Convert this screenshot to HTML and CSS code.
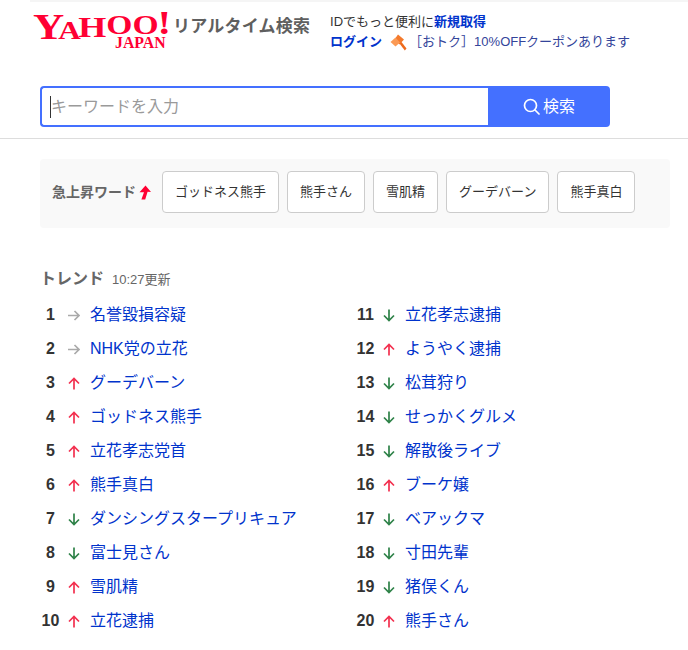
FILE: index.html
```html
<!DOCTYPE html>
<html lang="ja">
<head>
  <meta charset="UTF-8" />
  <meta name="viewport" content="width=device-width, initial-scale=1.0" />
  <title>Yahoo!リアルタイム検索</title>
  <link rel="stylesheet" href="styles.css">
</head>
<body>
  <svg class="defs" width="0" height="0">
    <symbol id="arrow-up" viewBox="0 0 12 13">
      <path d="M6 12.5 V1.5 M1 6.5 L6 1.5 L11 6.5" fill="none" stroke="currentColor" stroke-width="1.7"/>
    </symbol>
    <symbol id="arrow-down" viewBox="0 0 12 13">
      <path d="M6 .5 V11.5 M1 6.5 L6 11.5 L11 6.5" fill="none" stroke="currentColor" stroke-width="1.7"/>
    </symbol>
    <symbol id="arrow-same" viewBox="0 0 12 13">
      <path d="M0 6.5 H11 M6.5 2 L11 6.5 L6.5 11" fill="none" stroke="currentColor" stroke-width="1.7"/>
    </symbol>
  </svg>

  <div class="topstrip"></div>
  <header>
    <a class="logo" href="#">
      <span class="logo-yahoo"><span class="l-y">Y</span><span class="l-a">A</span><span class="l-h">H</span><span class="l-o">OO</span><span class="l-x">!</span></span>
      <span class="logo-japan">JAPAN</span>
    </a>
    <span class="service">リアルタイム検索</span>
    <div class="notice">
      <p>IDでもっと便利に<a href="#"><b>新規取得</b></a></p>
      <p class="notice-line">
        <a href="#"><b>ログイン</b></a>
        <svg class="hammer" width="17" height="17" viewBox="0 0 17 17">
          <path d="M8 0.5 L14 5.5 L9.5 10.5 L4.5 5.5 Z" fill="#f47a2c"/>
          <path d="M0.5 8 L5.5 3.5 L10 8.5 L5.5 12.5 Z" fill="#fb9a55"/>
          <path d="M9.5 9.5 L11.5 8 L16.5 14.5 L14.8 16.5 Z" fill="#ee6a1c"/>
        </svg>
        <a href="#" class="promo">［おトク］10%OFFクーポンあります</a>
      </p>
    </div>
  </header>

  <form class="search">
    <div class="search-field"><span class="caret"></span><span class="placeholder">キーワードを入力</span></div>
    <button type="button" class="search-btn">
      <svg width="17" height="17" viewBox="0 0 17 17" fill="none" stroke="#fff" stroke-width="1.7">
        <circle cx="7.5" cy="7.5" r="6"/>
        <path d="M12 12 L16 16" stroke-linecap="round"/>
      </svg>
      <span class="search-label">検索</span>
    </button>
  </form>

  <hr class="divider">

  <section class="rising">
    <span class="rising-label">急上昇ワード</span>
    <svg class="rising-arrow" width="12" height="15" viewBox="0 0 12 15">
      <path d="M6.5 0.5 L12 7 L8.6 6.8 L6.2 14.5 L2.4 14.5 L5 7.2 L0.5 7.2 Z" fill="#ff0033"/>
    </svg>
    <a class="chip" href="#">ゴッドネス熊手</a>
    <a class="chip" href="#">熊手さん</a>
    <a class="chip" href="#">雪肌精</a>
    <a class="chip" href="#">グーデバーン</a>
    <a class="chip" href="#">熊手真白</a>
  </section>

  <section class="trend">
    <h2>トレンド<span class="updated">10:27更新</span></h2>
    <ol class="ranking">
      <li><span class="rank">1</span><svg class="arrow same"><use href="#arrow-same"/></svg><a href="#">名誉毀損容疑</a></li>
      <li><span class="rank">2</span><svg class="arrow same"><use href="#arrow-same"/></svg><a href="#">NHK党の立花</a></li>
      <li><span class="rank">3</span><svg class="arrow up"><use href="#arrow-up"/></svg><a href="#">グーデバーン</a></li>
      <li><span class="rank">4</span><svg class="arrow up"><use href="#arrow-up"/></svg><a href="#">ゴッドネス熊手</a></li>
      <li><span class="rank">5</span><svg class="arrow up"><use href="#arrow-up"/></svg><a href="#">立花孝志党首</a></li>
      <li><span class="rank">6</span><svg class="arrow up"><use href="#arrow-up"/></svg><a href="#">熊手真白</a></li>
      <li><span class="rank">7</span><svg class="arrow down"><use href="#arrow-down"/></svg><a href="#">ダンシングスタープリキュア</a></li>
      <li><span class="rank">8</span><svg class="arrow down"><use href="#arrow-down"/></svg><a href="#">富士見さん</a></li>
      <li><span class="rank">9</span><svg class="arrow up"><use href="#arrow-up"/></svg><a href="#">雪肌精</a></li>
      <li><span class="rank">10</span><svg class="arrow up"><use href="#arrow-up"/></svg><a href="#">立花逮捕</a></li>
      <li><span class="rank">11</span><svg class="arrow down"><use href="#arrow-down"/></svg><a href="#">立花孝志逮捕</a></li>
      <li><span class="rank">12</span><svg class="arrow up"><use href="#arrow-up"/></svg><a href="#">ようやく逮捕</a></li>
      <li><span class="rank">13</span><svg class="arrow down"><use href="#arrow-down"/></svg><a href="#">松茸狩り</a></li>
      <li><span class="rank">14</span><svg class="arrow down"><use href="#arrow-down"/></svg><a href="#">せっかくグルメ</a></li>
      <li><span class="rank">15</span><svg class="arrow down"><use href="#arrow-down"/></svg><a href="#">解散後ライブ</a></li>
      <li><span class="rank">16</span><svg class="arrow up"><use href="#arrow-up"/></svg><a href="#">ブーケ嬢</a></li>
      <li><span class="rank">17</span><svg class="arrow down"><use href="#arrow-down"/></svg><a href="#">ベアックマ</a></li>
      <li><span class="rank">18</span><svg class="arrow down"><use href="#arrow-down"/></svg><a href="#">寸田先輩</a></li>
      <li><span class="rank">19</span><svg class="arrow down"><use href="#arrow-down"/></svg><a href="#">猪俣くん</a></li>
      <li><span class="rank">20</span><svg class="arrow up"><use href="#arrow-up"/></svg><a href="#">熊手さん</a></li>
    </ol>
  </section>
</body>
</html>
```

FILE: styles.css
```css
body {
  margin: 0;
  font-family: "Liberation Sans", "Noto Sans CJK JP", sans-serif;
  background-color: #fff;
  color: #333;
  overflow: hidden;
}

a {
  color: #0033cc;
  text-decoration: none;
}

p {
  margin: 0;
}

.defs {
  display: block;
  height: 0;
}

.topstrip {
  height: 2px;
  margin-left: 30px;
  background-color: #f5f5f5;
}

header {
  display: flex;
  align-items: flex-start;
  height: 59px;
  padding: 10px 0 0 33px;
  box-sizing: border-box;
}

.logo {
  position: relative;
  display: block;
  width: 138px;
  height: 38px;
  color: #ff0033;
  font-family: "Liberation Serif", serif;
  font-weight: bold;
}

.logo-yahoo {
  display: block;
  height: 26px;
  margin-top: -2px;
  line-height: 26px;
  white-space: nowrap;
  transform: scaleX(1.2);
  transform-origin: left;
}

.l-y {
  font-size: 36px;
}

.l-a {
  font-size: 26px;
  margin-left: -5px;
}

.l-h {
  font-size: 30px;
  vertical-align: 2px;
  margin-left: -2px;
}

.l-o {
  font-size: 28px;
  vertical-align: 5px;
}

.l-x {
  font-size: 34px;
  vertical-align: 5px;
  margin-left: -1px;
}

.logo-japan {
  position: absolute;
  left: 82px;
  top: 24px;
  font-size: 17px;
  line-height: 14px;
  transform: scaleX(0.93);
  transform-origin: left;
}

.service {
  margin: 3px 0 0 2px;
  font-size: 17px;
  line-height: 24px;
  font-weight: bold;
  letter-spacing: 0.2px;
  color: #5f5f5f;
  white-space: nowrap;
}

.notice {
  margin: 0 0 0 20px;
  font-size: 13px;
  line-height: 20px;
  white-space: nowrap;
}

.notice-line {
  display: flex;
  align-items: center;
}

.hammer {
  margin: 0 0 0 8px;
}

.promo {
  color: #33449a;
  margin-left: 2px;
}

.search {
  display: flex;
  width: 570px;
  height: 41px;
  margin: 25px 0 0 40px;
}

.search-field {
  flex: 1;
  display: flex;
  align-items: center;
  border: 2px solid #4470ff;
  border-right: none;
  border-radius: 4px 0 0 4px;
  padding-left: 8px;
  font-size: 16px;
  color: #9a9a9a;
}

.caret {
  width: 1px;
  height: 22px;
  background-color: #333;
}

.placeholder {
  padding-bottom: 3px;
}

.search-btn {
  display: flex;
  align-items: center;
  justify-content: center;
  gap: 3px;
  width: 122px;
  border: none;
  border-radius: 0 4px 4px 0;
  background-color: #4470ff;
  color: #fff;
  font-family: inherit;
  font-size: 16px;
  cursor: pointer;
}

.search-label {
  padding-bottom: 3px;
}

.divider {
  height: 1px;
  margin: 11px 0 0;
  border: none;
  background-color: #ddd;
}

.rising {
  display: flex;
  align-items: center;
  gap: 8px;
  width: 630px;
  height: 69px;
  box-sizing: border-box;
  margin: 20px 0 0 40px;
  padding: 0 0 3px 12px;
  background-color: #f9f9f9;
  border-radius: 4px;
}

.rising-label {
  font-size: 14px;
  font-weight: bold;
  color: #666;
  white-space: nowrap;
  margin-right: -5px;
  padding-bottom: 3px;
}

.rising-arrow {
  margin-right: 3px;
}

.chip {
  padding: 0 12px;
  height: 42px;
  line-height: 39px;
  box-sizing: border-box;
  border: 1px solid #ccc;
  border-radius: 4px;
  background-color: #fff;
  color: #333;
  font-size: 13px;
  white-space: nowrap;
}

.trend {
  margin: 40px 0 0 40px;
}

.trend h2 {
  margin: 0;
  font-size: 16px;
  line-height: 22px;
  color: #666;
}

.updated {
  margin-left: 8px;
  font-size: 13px;
  font-weight: normal;
}

.ranking {
  display: grid;
  grid-template-columns: 315px 315px;
  grid-template-rows: repeat(10, 34px);
  grid-auto-flow: column;
  margin: 7px 0 0;
  padding: 0;
  list-style: none;
}

.ranking li {
  display: flex;
  align-items: center;
  line-height: 24px;
}

.rank {
  width: 21px;
  text-align: center;
  font-size: 16px;
  font-weight: bold;
  color: #333;
  padding-top: 1px;
  margin-top: -2px;
}

.arrow {
  width: 12px;
  height: 13px;
  margin: 0 10px 0 7px;
}

.same {
  color: #aaa;
}

.up {
  color: #f3304f;
}

.down {
  color: #2e8248;
}

.ranking a {
  font-size: 16px;
  white-space: nowrap;
}
```
